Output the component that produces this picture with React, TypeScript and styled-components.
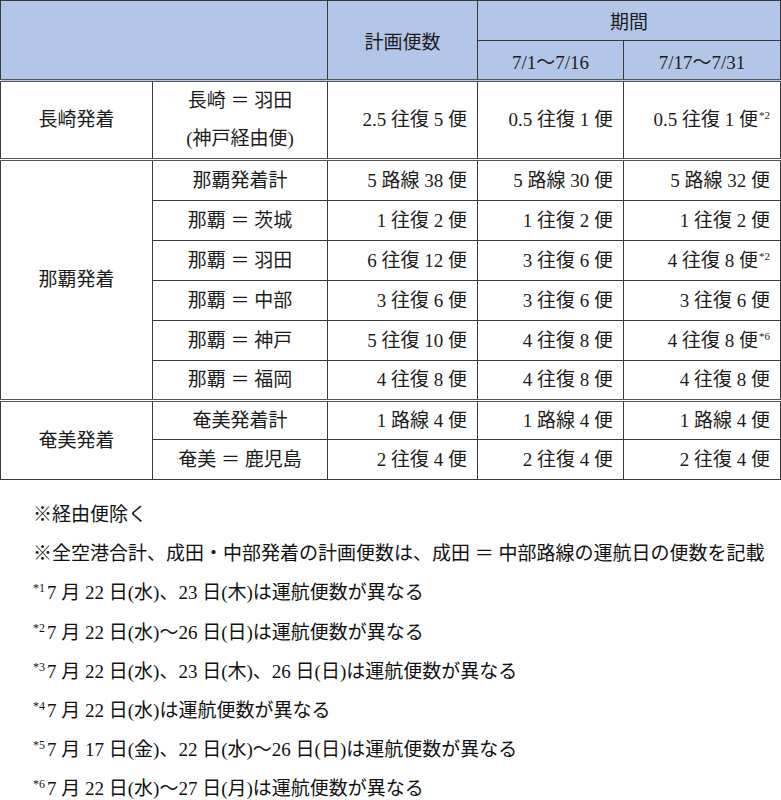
import React from "react";
import styled, { createGlobalStyle } from "styled-components";

const Global = createGlobalStyle`
  html, body { margin: 0; padding: 0; background: #ffffff; }
  body {
    font-family: "Liberation Serif", "Noto Sans CJK JP", serif;
    color: #1c1c1c;
  }
`;

const Page = styled.div`
  width: 781px;
`;

const Table = styled.table`
  width: 780px;
  border-collapse: collapse;
  table-layout: fixed;
  font-size: 19px;
`;

const HeadRow = styled.tr`
  height: 40px;
`;

const Row = styled.tr<{ $h?: number }>`
  height: ${(p) => p.$h ?? 40}px;
`;

const HeadCell = styled.th<{ $serif?: boolean }>`
  background: #b4c6e7;
  border: 1px solid #383838;
  font-weight: 400;
  padding: 0;
  text-align: center;
  vertical-align: middle;
  font-family: ${(p) =>
    p.$serif
      ? `"Liberation Serif", "Noto Sans CJK JP", serif`
      : `"Noto Sans CJK JP", sans-serif`};
`;

const Cell = styled.td<{ $align?: "center" | "right"; $groupTop?: boolean; $headBottom?: boolean; $lh?: number }>`
  border: 1px solid #3a3a3a;
  border-top: ${(p) =>
    p.$groupTop ? "3px double #555" : p.$headBottom ? "3px double #555" : "1px solid #3a3a3a"};
  padding: ${(p) => (p.$align === "right" ? "0 10px 0 0" : "0")};
  text-align: ${(p) => p.$align ?? "center"};
  vertical-align: middle;
  line-height: ${(p) => p.$lh ?? 36}px;
  white-space: nowrap;
`;

const Sup = styled.sup`
  font-size: 11px;
  line-height: 0;
  vertical-align: 7px;
  margin-left: 1px;
`;

const Notes = styled.div`
  padding: 15px 0 0 33px;
  font-size: 19px;
  line-height: 39.2px;
  color: #111;
`;

const NoteLine = styled.div`
  white-space: nowrap;
`;

const NoteSup = styled.sup`
  font-size: 12px;
  line-height: 0;
  vertical-align: 7px;
  margin-right: 2px;
`;

type R = { route: React.ReactNode; plan: string; p1: string; p2: string; s2?: string };

const naha: R[] = [
  { route: "那覇発着計", plan: "5 路線 38 便", p1: "5 路線 30 便", p2: "5 路線 32 便" },
  { route: "那覇 ＝ 茨城", plan: "1 往復 2 便", p1: "1 往復 2 便", p2: "1 往復 2 便" },
  { route: "那覇 ＝ 羽田", plan: "6 往復 12 便", p1: "3 往復 6 便", p2: "4 往復 8 便", s2: "*2" },
  { route: "那覇 ＝ 中部", plan: "3 往復 6 便", p1: "3 往復 6 便", p2: "3 往復 6 便" },
  { route: "那覇 ＝ 神戸", plan: "5 往復 10 便", p1: "4 往復 8 便", p2: "4 往復 8 便", s2: "*6" },
  { route: "那覇 ＝ 福岡", plan: "4 往復 8 便", p1: "4 往復 8 便", p2: "4 往復 8 便" },
];

const amami: R[] = [
  { route: "奄美発着計", plan: "1 路線 4 便", p1: "1 路線 4 便", p2: "1 路線 4 便" },
  { route: "奄美 ＝ 鹿児島", plan: "2 往復 4 便", p1: "2 往復 4 便", p2: "2 往復 4 便" },
];

const notes: { sup?: string; text: string }[] = [
  { text: "※経由便除く" },
  { text: "※全空港合計、成田・中部発着の計画便数は、成田 ＝ 中部路線の運航日の便数を記載" },
  { sup: "*1", text: "7 月 22 日(水)、23 日(木)は運航便数が異なる" },
  { sup: "*2", text: "7 月 22 日(水)～26 日(日)は運航便数が異なる" },
  { sup: "*3", text: "7 月 22 日(水)、23 日(木)、26 日(日)は運航便数が異なる" },
  { sup: "*4", text: "7 月 22 日(水)は運航便数が異なる" },
  { sup: "*5", text: "7 月 17 日(金)、22 日(水)～26 日(日)は運航便数が異なる" },
  { sup: "*6", text: "7 月 22 日(水)～27 日(月)は運航便数が異なる" },
];

function Group({ label, rows, firstH }: { label: string; rows: R[]; firstH: number }) {
  return (
    <>
      {rows.map((r, i) => (
        <Row key={i} $h={i === 0 ? firstH : 40}>
          {i === 0 && (
            <Cell rowSpan={rows.length} $groupTop>
              {label}
            </Cell>
          )}
          <Cell $groupTop={i === 0}>{r.route}</Cell>
          <Cell $align="right" $groupTop={i === 0}>{r.plan}</Cell>
          <Cell $align="right" $groupTop={i === 0}>{r.p1}</Cell>
          <Cell $align="right" $groupTop={i === 0}>
            {r.p2}
            {r.s2 && <Sup>{r.s2}</Sup>}
          </Cell>
        </Row>
      ))}
    </>
  );
}

export default function App() {
  return (
    <Page>
      <Global />
      <Table>
        <colgroup>
          <col style={{ width: 152 }} />
          <col style={{ width: 175 }} />
          <col style={{ width: 150 }} />
          <col style={{ width: 146 }} />
          <col style={{ width: 157 }} />
        </colgroup>
        <thead>
          <HeadRow>
            <HeadCell colSpan={2} rowSpan={2} />
            <HeadCell rowSpan={2}>計画便数</HeadCell>
            <HeadCell colSpan={2}>期間</HeadCell>
          </HeadRow>
          <HeadRow>
            <HeadCell $serif>7/1～7/16</HeadCell>
            <HeadCell $serif>7/17～7/31</HeadCell>
          </HeadRow>
        </thead>
        <tbody>
          <Row $h={74}>
            <Cell $headBottom>長崎発着</Cell>
            <Cell $headBottom $lh={38}>
              長崎 ＝ 羽田
              <br />
              (神戸経由便)
            </Cell>
            <Cell $align="right" $headBottom>2.5 往復 5 便</Cell>
            <Cell $align="right" $headBottom>0.5 往復 1 便</Cell>
            <Cell $align="right" $headBottom>
              0.5 往復 1 便<Sup>*2</Sup>
            </Cell>
          </Row>
          <Group label="那覇発着" rows={naha} firstH={41} />
          <Group label="奄美発着" rows={amami} firstH={39} />
        </tbody>
      </Table>
      <Notes>
        {notes.map((n, i) => (
          <NoteLine key={i}>
            {n.sup && <NoteSup>{n.sup}</NoteSup>}
            {n.text}
          </NoteLine>
        ))}
      </Notes>
    </Page>
  );
}
